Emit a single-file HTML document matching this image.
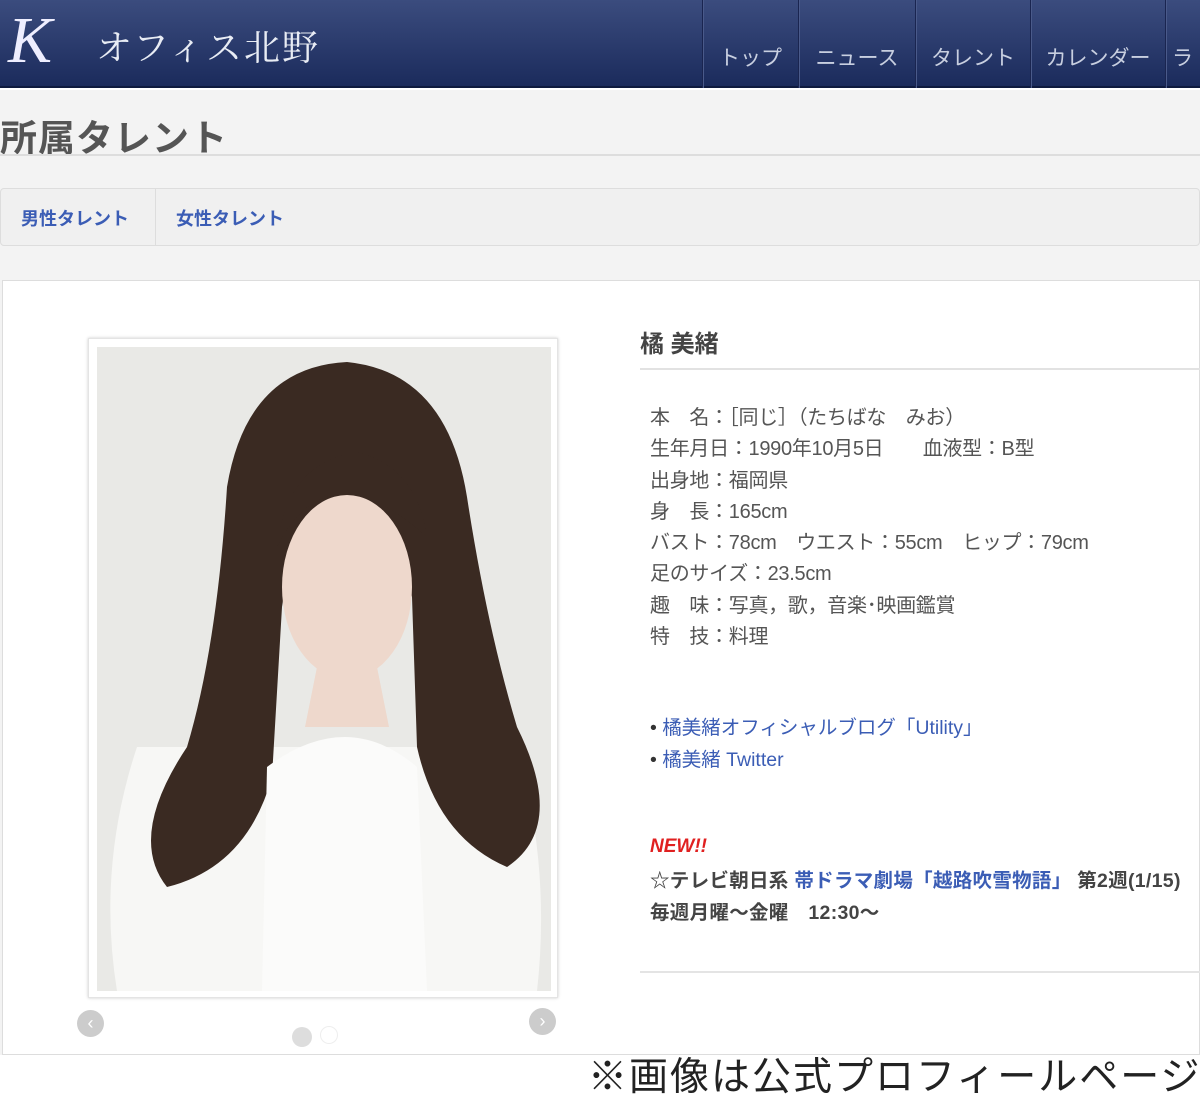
<!DOCTYPE html>
<html><head><meta charset="utf-8"><style>
*{margin:0;padding:0;box-sizing:border-box}
body{width:1200px;height:1104px;background:#fff;font-family:"Liberation Sans","Noto Sans CJK JP",sans-serif;position:relative;overflow:hidden}
.hdr{position:absolute;left:0;top:0;width:1200px;height:88px;background:linear-gradient(#3b4c7e,#1b2b5c);border-bottom:2px solid #0e1a3e}
.logo{position:absolute;left:8px;top:6px;font-family:"Liberation Serif",serif;font-style:italic;font-size:66px;color:#eef;line-height:70px}
.brand{position:absolute;left:96px;top:20px;font-family:"Noto Serif CJK SC",serif;font-size:36px;color:#e8ecf4;letter-spacing:2px}
.nav{position:absolute;top:0;height:88px;border-left:1px solid #1a2550;box-shadow:inset 1px 0 0 #4a5a8a;color:#c8cfe0;font-size:21px;padding-top:42px;text-align:center}
.main{position:absolute;left:0;top:90px;width:1200px;height:965px;background:#f3f3f3}
h1{position:absolute;left:0;top:108px;font-size:37px;font-weight:bold;color:#555;letter-spacing:1px}
.hl{position:absolute;left:0;top:154px;width:1200px;height:2px;background:#ddd}
.tabs{position:absolute;left:0;top:188px;width:1200px;height:58px;background:#f0f0f0;border:1px solid #ddd;border-radius:4px}
.tab{position:absolute;top:16px;font-size:18px;font-weight:bold;color:#3b5db5}
.panel{position:absolute;left:2px;top:280px;width:1198px;height:775px;background:#fff;border:1px solid #ddd}
.frame{position:absolute;left:88px;top:338px;width:470px;height:660px;background:#fff;border:1px solid #e4e4e4;box-shadow:0 0 3px #ccc}
.info{position:absolute;left:650px;top:403px;font-size:20px;color:#555;line-height:31.3px;letter-spacing:-0.3px;white-space:nowrap}
a{color:#3b5db5;text-decoration:none}
</style></head><body>
<div class="hdr">
<div class="logo">K</div>
<div class="brand">オフィス北野</div>
<div class="nav" style="left:702px;width:96px">トップ</div>
<div class="nav" style="left:798px;width:117px">ニュース</div>
<div class="nav" style="left:915px;width:115px">タレント</div>
<div class="nav" style="left:1030px;width:135px">カレンダー</div>
<div class="nav" style="left:1165px;width:60px;text-align:left;padding-left:6px">ラ</div>
</div>
<div class="main"></div>
<h1>所属タレント</h1>
<div class="hl"></div>
<div class="tabs">
<div class="tab" style="left:20px">男性タレント</div>
<div style="position:absolute;left:154px;top:0;width:1px;height:56px;background:#ddd"></div>
<div class="tab" style="left:175px">女性タレント</div>
</div>
<div class="panel"></div>
<div class="frame">
<svg width="454" height="644" style="position:absolute;left:8px;top:8px" viewBox="0 0 454 644">
<rect width="454" height="644" fill="#e9e9e6"/>
<path d="M40 400 Q0 520 20 644 L440 644 Q454 520 420 400 Z" fill="#f7f7f5"/>
<path d="M130 140 Q150 20 250 15 Q350 25 370 150 Q390 280 420 380 Q470 480 410 520 Q340 490 320 400 L315 250 Q300 190 250 180 Q195 185 185 260 L175 430 Q150 520 70 540 Q30 490 90 400 Q120 300 130 140 Z" fill="#3a2a22"/>
<ellipse cx="250" cy="240" rx="65" ry="92" fill="#eed8cc"/>
<path d="M180 200 Q230 100 330 190 Q320 120 260 105 Q190 115 180 200Z" fill="#3a2a22"/>
<path d="M220 320 L280 320 L292 380 L208 380Z" fill="#eed8cc"/>
<path d="M170 420 Q250 360 320 420 L330 644 L165 644Z" fill="#fbfbfa"/>
</svg>
</div>
<div style="position:absolute;left:77px;top:1010px;width:27px;height:27px;border-radius:50%;background:#ccc;color:#fff;text-align:center;font-size:18px;line-height:27px">‹</div>
<div style="position:absolute;left:529px;top:1008px;width:27px;height:27px;border-radius:50%;background:#ccc;color:#fff;text-align:center;font-size:18px;line-height:27px">›</div>
<div style="position:absolute;left:292px;top:1027px;width:20px;height:20px;border-radius:50%;background:#ddd"></div>
<div style="position:absolute;left:320px;top:1026px;width:18px;height:18px;border-radius:50%;border:1px solid #eee"></div>
<div style="position:absolute;left:640px;top:324px;font-size:24px;font-weight:bold;color:#444">橘 美緒</div>
<div style="position:absolute;left:640px;top:368px;width:560px;height:2px;background:#e2e2e2"></div>
<div class="info">
本　名：［同じ］（たちばな　みお）<br>
生年月日：1990年10月5日　　血液型：B型<br>
出身地：福岡県<br>
身　長：165cm<br>
バスト：78cm　ウエスト：55cm　ヒップ：79cm<br>
足のサイズ：23.5cm<br>
趣　味：写真，歌，音楽･映画鑑賞<br>
特　技：料理
</div>
<div style="position:absolute;left:650px;top:712px;font-size:19.5px;line-height:32px;color:#333;white-space:nowrap">
• <a>橘美緒オフィシャルブログ「Utility」</a><br>• <a>橘美緒 Twitter</a></div>
<div style="position:absolute;left:650px;top:836px;font-size:19px;font-weight:bold;font-style:italic;color:#e02020">NEW!!</div>
<div style="position:absolute;left:650px;top:865px;font-size:19.5px;font-weight:bold;color:#444;line-height:32px;white-space:nowrap;letter-spacing:0.3px">☆テレビ朝日系 <a>帯ドラマ劇場「越路吹雪物語」</a> 第2週(1/15)<br>毎週月曜～金曜　12:30～</div>
<div style="position:absolute;left:640px;top:971px;width:560px;height:2px;background:#e4e4e4"></div>
<div style="position:absolute;left:588px;top:1046px;font-size:39px;color:#222;white-space:nowrap;letter-spacing:2px">※画像は公式プロフィールページ</div>
</body></html>
